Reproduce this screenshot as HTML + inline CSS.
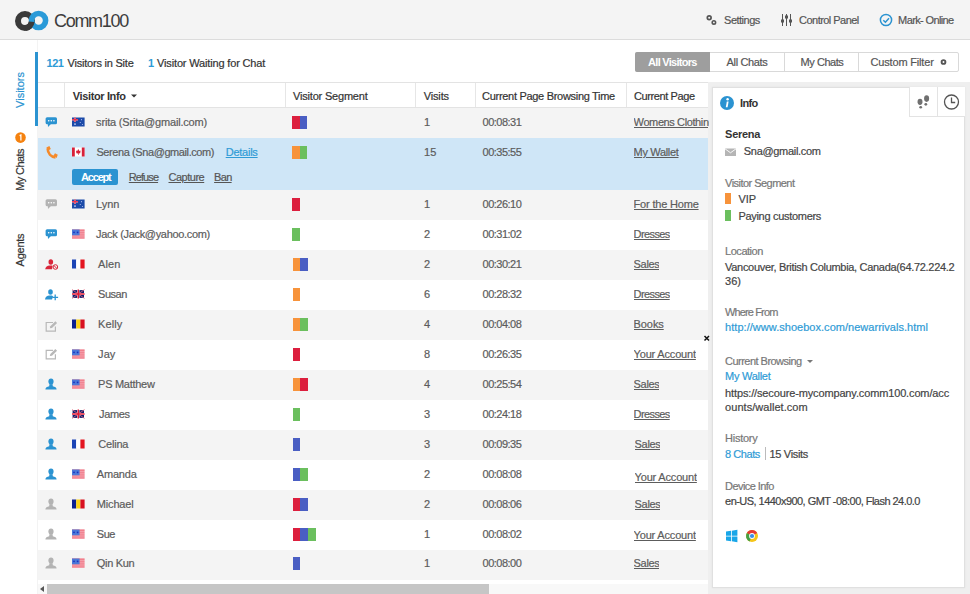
<!DOCTYPE html><html><head><meta charset='utf-8'><style>
*{margin:0;padding:0;box-sizing:border-box}
html,body{width:970px;height:594px;overflow:hidden;background:#fff;font-family:"Liberation Sans",sans-serif}
.a{position:absolute}
.t{position:absolute;white-space:nowrap;line-height:14px;font-family:"Liberation Sans",sans-serif;-webkit-text-stroke:0.2px currentColor}
.pg{overflow:hidden;max-width:75px}
</style></head><body>
<div class='a' style='left:0;top:0;width:970px;height:40px;background:#f4f4f4;border-bottom:1px solid #dcdcdc'></div><div class='a' style='left:37px;top:40px;width:1px;height:554px;background:#f3f3f3'></div><div class='a' style='left:35px;top:52px;width:3px;height:74px;background:#2b93d1'></div><div class='a' style='left:708px;top:82px;width:262px;height:512px;background:#efefef'></div><div class='a' style='left:38px;top:82px;width:670px;height:26px;background:#fff;border-top:1px solid #e3e3e3;border-bottom:1px solid #e3e3e3'></div><div class='a' style='left:64px;top:83px;width:1px;height:24px;background:#e6e6e6'></div><div class='a' style='left:285px;top:83px;width:1px;height:24px;background:#e6e6e6'></div><div class='a' style='left:415px;top:83px;width:1px;height:24px;background:#e6e6e6'></div><div class='a' style='left:475px;top:83px;width:1px;height:24px;background:#e6e6e6'></div><div class='a' style='left:626px;top:83px;width:1px;height:24px;background:#e6e6e6'></div><div class='a' style='left:38px;top:108px;width:670px;height:30px;background:#f4f4f4'></div><div class='a' style='left:38px;top:138px;width:670px;height:52px;background:#cfe6f7'></div><div class='a' style='left:38px;top:190px;width:670px;height:30px;background:#f4f4f4'></div><div class='a' style='left:38px;top:220px;width:670px;height:30px;background:#fff'></div><div class='a' style='left:38px;top:250px;width:670px;height:30px;background:#f4f4f4'></div><div class='a' style='left:38px;top:280px;width:670px;height:30px;background:#fff'></div><div class='a' style='left:38px;top:310px;width:670px;height:30px;background:#f4f4f4'></div><div class='a' style='left:38px;top:340px;width:670px;height:30px;background:#fff'></div><div class='a' style='left:38px;top:370px;width:670px;height:30px;background:#f4f4f4'></div><div class='a' style='left:38px;top:400px;width:670px;height:30px;background:#fff'></div><div class='a' style='left:38px;top:430px;width:670px;height:30px;background:#f4f4f4'></div><div class='a' style='left:38px;top:460px;width:670px;height:30px;background:#fff'></div><div class='a' style='left:38px;top:490px;width:670px;height:30px;background:#f4f4f4'></div><div class='a' style='left:38px;top:520px;width:670px;height:30px;background:#fff'></div><div class='a' style='left:38px;top:550px;width:670px;height:30px;background:#f4f4f4'></div><div class='a' style='left:38px;top:580px;width:670px;height:14px;background:#fff'></div><div class='a' style='left:38px;top:584px;width:670px;height:10px;background:#f8f8f8'></div><div class='a' style='left:47px;top:584px;width:442px;height:10px;background:#c6c6c6'></div><div class='a' style='left:40px;top:586px;width:0;height:0;border-top:3px solid transparent;border-bottom:3px solid transparent;border-right:4px solid #555'></div><div class='a' style='left:292.0px;top:116px;width:7.6px;height:13px;background:#dc1f3e'></div><div class='a' style='left:299.6px;top:116px;width:7.6px;height:13px;background:#4a5ec3'></div><div class='a' style='left:292.0px;top:146px;width:7.6px;height:13px;background:#f7933b'></div><div class='a' style='left:299.6px;top:146px;width:7.6px;height:13px;background:#6bbf5e'></div><div class='a' style='left:292.0px;top:198px;width:7.6px;height:13px;background:#dc1f3e'></div><div class='a' style='left:292.0px;top:228px;width:7.6px;height:13px;background:#6bbf5e'></div><div class='a' style='left:292.8px;top:258px;width:7.6px;height:13px;background:#f7933b'></div><div class='a' style='left:300.40000000000003px;top:258px;width:7.6px;height:13px;background:#4a5ec3'></div><div class='a' style='left:292.8px;top:288px;width:7.6px;height:13px;background:#f7933b'></div><div class='a' style='left:292.8px;top:318px;width:7.6px;height:13px;background:#f7933b'></div><div class='a' style='left:300.40000000000003px;top:318px;width:7.6px;height:13px;background:#6bbf5e'></div><div class='a' style='left:292.8px;top:348px;width:7.6px;height:13px;background:#dc1f3e'></div><div class='a' style='left:292.8px;top:378px;width:7.6px;height:13px;background:#f7933b'></div><div class='a' style='left:300.40000000000003px;top:378px;width:7.6px;height:13px;background:#dc1f3e'></div><div class='a' style='left:292.8px;top:408px;width:7.6px;height:13px;background:#6bbf5e'></div><div class='a' style='left:292.8px;top:438px;width:7.6px;height:13px;background:#4a5ec3'></div><div class='a' style='left:292.8px;top:468px;width:7.6px;height:13px;background:#4a5ec3'></div><div class='a' style='left:300.40000000000003px;top:468px;width:7.6px;height:13px;background:#6bbf5e'></div><div class='a' style='left:292.8px;top:498px;width:7.6px;height:13px;background:#dc1f3e'></div><div class='a' style='left:300.40000000000003px;top:498px;width:7.6px;height:13px;background:#4a5ec3'></div><div class='a' style='left:292.8px;top:528px;width:7.6px;height:13px;background:#dc1f3e'></div><div class='a' style='left:300.40000000000003px;top:528px;width:7.6px;height:13px;background:#4a5ec3'></div><div class='a' style='left:308.0px;top:528px;width:7.6px;height:13px;background:#6bbf5e'></div><div class='a' style='left:292.8px;top:557px;width:7.6px;height:13px;background:#4a5ec3'></div><div class='a' style='left:712px;top:87px;width:253px;height:501px;background:#fff;border:1px solid #e0e0e0;box-shadow:0 0 2px rgba(0,0,0,0.06)'></div><div class='a' style='left:909px;top:87px;width:29px;height:30px;border:1px solid #e3e3e3;border-top:none;background:#fff'></div><div class='a' style='left:937px;top:87px;width:28px;height:30px;border-left:1px solid #e3e3e3;border-bottom:1px solid #e3e3e3;background:#fff'></div><div class='a' style='left:725px;top:193px;width:5.5px;height:11px;background:#f7933b'></div><div class='a' style='left:725px;top:210px;width:5.5px;height:11px;background:#6bbf5e'></div><div class='a' style='left:765px;top:447px;width:1px;height:13px;background:#bbb'></div><div class='a' style='left:72px;top:169px;width:46px;height:16px;background:#2b93d1;border-radius:2px'></div><div class='a' style='left:635px;top:52px;width:324px;height:20px;border:1px solid #d9d9d9;border-radius:2px;background:#fff'></div><div class='a' style='left:635px;top:52px;width:75px;height:20px;background:#9e9e9e;border-radius:2px 0 0 2px'></div><div class='a' style='left:784px;top:52px;width:1px;height:20px;background:#d9d9d9'></div><div class='a' style='left:858px;top:52px;width:1px;height:20px;background:#d9d9d9'></div>
<svg class='a' style='left:0;top:0' width='970' height='594' viewBox='0 0 970 594'><rect x='45.6' y='117.2' width='11.4' height='7' rx='1.5' fill='#2b93d1'/><path d='M47.8 123.8 L48 127 L51.2 123.8 Z' fill='#2b93d1'/><circle cx='48.7' cy='120.7' r='0.8' fill='#fff'/><circle cx='51.3' cy='120.7' r='0.8' fill='#fff'/><circle cx='53.9' cy='120.7' r='0.8' fill='#fff'/><path d='M47.6 148.4 C47.8 153.5 51 157 55.5 157.4' stroke='#f58a2a' stroke-width='2.6' fill='none'/><path d='M46.4 147.4 L49.4 146 L50.8 149 L48.3 150.4 Z' fill='#f58a2a'/><path d='M53.5 155.6 L55 153.2 L57.8 154.8 L56.6 158 Z' fill='#f58a2a'/><rect x='45.6' y='199.2' width='11.4' height='7' rx='1.5' fill='#b3b3b3'/><path d='M47.8 205.8 L48 209 L51.2 205.8 Z' fill='#b3b3b3'/><circle cx='48.7' cy='202.7' r='0.8' fill='#fff'/><circle cx='51.3' cy='202.7' r='0.8' fill='#fff'/><circle cx='53.9' cy='202.7' r='0.8' fill='#fff'/><rect x='45.6' y='229.2' width='11.4' height='7' rx='1.5' fill='#2b93d1'/><path d='M47.8 235.8 L48 239 L51.2 235.8 Z' fill='#2b93d1'/><circle cx='48.7' cy='232.7' r='0.8' fill='#fff'/><circle cx='51.3' cy='232.7' r='0.8' fill='#fff'/><circle cx='53.9' cy='232.7' r='0.8' fill='#fff'/><ellipse cx='50.8' cy='262' rx='2.3' ry='2.8' fill='#d9253a'/><path d='M45.2 269.3 C45.4 266.8 47.4 265.6 49.6 265.4 L52 265.4 C52.8 265.6 53 266 53 266.4 L52 269.3 Z' fill='#d9253a'/><circle cx='55.4' cy='267' r='2.9' fill='#f4f4f4'/><circle cx='55.4' cy='267' r='2.3' stroke='#d9253a' stroke-width='1' fill='none'/><path d='M53.8 265.4 L57 268.6' stroke='#d9253a' stroke-width='1'/><ellipse cx='50.5' cy='292' rx='2.3' ry='2.8' fill='#2b93d1'/><path d='M45 299.6 C45.2 297 47.2 295.8 49.4 295.6 L51.8 295.6 C52.6 295.8 53 296.2 53 296.6 L52 299.6 Z' fill='#2b93d1'/><path d='M55.2 294.6 V300.2 M52.3 297.4 H58.1' stroke='#2b93d1' stroke-width='1.3'/><path d='M53 322.5 H46.2 V331.1 H55.4 V326.5' stroke='#b8b8b8' stroke-width='1.2' fill='none'/><path d='M49.8 328.3 L50.3 326.2 L55.3 321.2 L57.1 322.9 L52 327.9 Z' fill='#b8b8b8'/><path d='M53 350.3 H46.2 V358.90000000000003 H55.4 V354.3' stroke='#b8b8b8' stroke-width='1.2' fill='none'/><path d='M49.8 356.1 L50.3 354.0 L55.3 349.0 L57.1 350.7 L52 355.7 Z' fill='#b8b8b8'/><ellipse cx='51' cy='381.6' rx='2.6' ry='3.1' fill='#2b93d1'/><path d='M49.4 384.2 L52.6 384.2 L52.8 386.2 C55 386.6 56.6 387.4 56.6 389.6 L45.4 389.6 C45.4 387.4 47 386.6 49.2 386.2 Z' fill='#2b93d1'/><ellipse cx='51' cy='411.6' rx='2.6' ry='3.1' fill='#2b93d1'/><path d='M49.4 414.2 L52.6 414.2 L52.8 416.2 C55 416.6 56.6 417.4 56.6 419.6 L45.4 419.6 C45.4 417.4 47 416.6 49.2 416.2 Z' fill='#2b93d1'/><ellipse cx='51' cy='441.6' rx='2.6' ry='3.1' fill='#2b93d1'/><path d='M49.4 444.2 L52.6 444.2 L52.8 446.2 C55 446.6 56.6 447.4 56.6 449.6 L45.4 449.6 C45.4 447.4 47 446.6 49.2 446.2 Z' fill='#2b93d1'/><ellipse cx='51' cy='471.6' rx='2.6' ry='3.1' fill='#2b93d1'/><path d='M49.4 474.2 L52.6 474.2 L52.8 476.2 C55 476.6 56.6 477.4 56.6 479.6 L45.4 479.6 C45.4 477.4 47 476.6 49.2 476.2 Z' fill='#2b93d1'/><ellipse cx='51' cy='501.6' rx='2.6' ry='3.1' fill='#b3b3b3'/><path d='M49.4 504.2 L52.6 504.2 L52.8 506.2 C55 506.6 56.6 507.4 56.6 509.6 L45.4 509.6 C45.4 507.4 47 506.6 49.2 506.2 Z' fill='#b3b3b3'/><ellipse cx='51' cy='531.6' rx='2.6' ry='3.1' fill='#b3b3b3'/><path d='M49.4 534.2 L52.6 534.2 L52.8 536.2 C55 536.6 56.6 537.4 56.6 539.6 L45.4 539.6 C45.4 537.4 47 536.6 49.2 536.2 Z' fill='#b3b3b3'/><ellipse cx='51' cy='560.6' rx='2.6' ry='3.1' fill='#b3b3b3'/><path d='M49.4 563.2 L52.6 563.2 L52.8 565.2 C55 565.6 56.6 566.4 56.6 568.6 L45.4 568.6 C45.4 566.4 47 565.6 49.2 565.2 Z' fill='#b3b3b3'/><rect x='72' y='117.5' width='12.6' height='9' fill='#1b4aa8'/><path d='M72 119.7 H78 M75 117.5 V121.9' stroke='#f6b0bb' stroke-width='1.6'/><path d='M72 119.7 H78 M75 117.5 V121.9' stroke='#e8203f' stroke-width='1'/><circle cx='75' cy='124.1' r='0.9' fill='#c8d2f5'/><circle cx='81.5' cy='119.7' r='0.6' fill='#aebdf0'/><circle cx='80.3' cy='122.5' r='0.6' fill='#aebdf0'/><circle cx='82.5' cy='124.5' r='0.6' fill='#aebdf0'/><rect x='72' y='147.5' width='12.6' height='9' fill='#fff'/><rect x='72' y='147.5' width='2.8' height='9' fill='#d8213a'/><rect x='81.8' y='147.5' width='2.8' height='9' fill='#d8213a'/><path d='M78.3 149.1 L79.4 150.9 L80.6 150.5 L80.2 153.3 L78.6 153.5 L78.6 155.1 L78 155.1 L78 153.5 L76.4 153.3 L76 150.5 L77.2 150.9 Z' fill='#d8213a'/><rect x='72' y='199.5' width='12.6' height='9' fill='#1b4aa8'/><path d='M72 201.7 H78 M75 199.5 V203.9' stroke='#f6b0bb' stroke-width='1.6'/><path d='M72 201.7 H78 M75 199.5 V203.9' stroke='#e8203f' stroke-width='1'/><circle cx='75' cy='206.1' r='0.9' fill='#c8d2f5'/><circle cx='81.5' cy='201.7' r='0.6' fill='#aebdf0'/><circle cx='80.3' cy='204.5' r='0.6' fill='#aebdf0'/><circle cx='82.5' cy='206.5' r='0.6' fill='#aebdf0'/><rect x='72' y='229.5' width='12.6' height='9' fill='#fbe3e6'/><rect x='72' y='229.5' width='12.6' height='1.3' fill='#ee6677'/><rect x='72' y='231.45' width='12.6' height='1.3' fill='#ee6677'/><rect x='72' y='233.4' width='12.6' height='1.3' fill='#ee6677'/><rect x='72' y='235.35' width='12.6' height='1.3' fill='#ee6677'/><rect x='72' y='237.3' width='12.6' height='1.3' fill='#ee6677'/><rect x='72' y='229.5' width='7.6' height='5.8' fill='#4a78d8'/><circle cx='74' cy='232.3' r='0.9' fill='#1a2fbf'/><circle cx='77.6' cy='232.3' r='0.9' fill='#1a2fbf'/><rect x='72' y='259.5' width='4.2' height='9' fill='#1d45b5'/><rect x='76.2' y='259.5' width='4.2' height='9' fill='#fff'/><rect x='80.4' y='259.5' width='4.2' height='9' fill='#e3141f'/><rect x='72' y='289.5' width='12.6' height='9' fill='#fff'/><rect x='72.6' y='290.1' width='4.6' height='2.9' fill='#12206e'/><rect x='79.4' y='290.1' width='4.6' height='2.9' fill='#12206e'/><rect x='72.6' y='295.0' width='4.6' height='2.9' fill='#12206e'/><rect x='79.4' y='295.0' width='4.6' height='2.9' fill='#12206e'/><path d='M72 289.5 L84.6 298.5 M84.6 289.5 L72 298.5' stroke='#e86a80' stroke-width='0.8'/><path d='M72 294.0 H84.6 M78.3 289.5 V298.5' stroke='#e31a35' stroke-width='1.4'/><rect x='72' y='319.5' width='4.2' height='9' fill='#0c1f8f'/><rect x='76.2' y='319.5' width='4.2' height='9' fill='#fcd116'/><rect x='80.4' y='319.5' width='4.2' height='9' fill='#d8101f'/><rect x='72' y='349.5' width='12.6' height='9' fill='#fbe3e6'/><rect x='72' y='349.5' width='12.6' height='1.3' fill='#ee6677'/><rect x='72' y='351.45' width='12.6' height='1.3' fill='#ee6677'/><rect x='72' y='353.4' width='12.6' height='1.3' fill='#ee6677'/><rect x='72' y='355.35' width='12.6' height='1.3' fill='#ee6677'/><rect x='72' y='357.3' width='12.6' height='1.3' fill='#ee6677'/><rect x='72' y='349.5' width='7.6' height='5.8' fill='#4a78d8'/><circle cx='74' cy='352.3' r='0.9' fill='#1a2fbf'/><circle cx='77.6' cy='352.3' r='0.9' fill='#1a2fbf'/><rect x='72' y='379.5' width='12.6' height='9' fill='#fbe3e6'/><rect x='72' y='379.5' width='12.6' height='1.3' fill='#ee6677'/><rect x='72' y='381.45' width='12.6' height='1.3' fill='#ee6677'/><rect x='72' y='383.4' width='12.6' height='1.3' fill='#ee6677'/><rect x='72' y='385.35' width='12.6' height='1.3' fill='#ee6677'/><rect x='72' y='387.3' width='12.6' height='1.3' fill='#ee6677'/><rect x='72' y='379.5' width='7.6' height='5.8' fill='#4a78d8'/><circle cx='74' cy='382.3' r='0.9' fill='#1a2fbf'/><circle cx='77.6' cy='382.3' r='0.9' fill='#1a2fbf'/><rect x='72' y='409.5' width='12.6' height='9' fill='#fff'/><rect x='72.6' y='410.1' width='4.6' height='2.9' fill='#12206e'/><rect x='79.4' y='410.1' width='4.6' height='2.9' fill='#12206e'/><rect x='72.6' y='415.0' width='4.6' height='2.9' fill='#12206e'/><rect x='79.4' y='415.0' width='4.6' height='2.9' fill='#12206e'/><path d='M72 409.5 L84.6 418.5 M84.6 409.5 L72 418.5' stroke='#e86a80' stroke-width='0.8'/><path d='M72 414.0 H84.6 M78.3 409.5 V418.5' stroke='#e31a35' stroke-width='1.4'/><rect x='72' y='439.5' width='4.2' height='9' fill='#1d45b5'/><rect x='76.2' y='439.5' width='4.2' height='9' fill='#fff'/><rect x='80.4' y='439.5' width='4.2' height='9' fill='#e3141f'/><rect x='72' y='469.5' width='12.6' height='9' fill='#fbe3e6'/><rect x='72' y='469.5' width='12.6' height='1.3' fill='#ee6677'/><rect x='72' y='471.45' width='12.6' height='1.3' fill='#ee6677'/><rect x='72' y='473.4' width='12.6' height='1.3' fill='#ee6677'/><rect x='72' y='475.35' width='12.6' height='1.3' fill='#ee6677'/><rect x='72' y='477.3' width='12.6' height='1.3' fill='#ee6677'/><rect x='72' y='469.5' width='7.6' height='5.8' fill='#4a78d8'/><circle cx='74' cy='472.3' r='0.9' fill='#1a2fbf'/><circle cx='77.6' cy='472.3' r='0.9' fill='#1a2fbf'/><rect x='72' y='499.5' width='4.2' height='9' fill='#0c1f8f'/><rect x='76.2' y='499.5' width='4.2' height='9' fill='#fcd116'/><rect x='80.4' y='499.5' width='4.2' height='9' fill='#d8101f'/><rect x='72' y='529.5' width='12.6' height='9' fill='#fbe3e6'/><rect x='72' y='529.5' width='12.6' height='1.3' fill='#ee6677'/><rect x='72' y='531.45' width='12.6' height='1.3' fill='#ee6677'/><rect x='72' y='533.4' width='12.6' height='1.3' fill='#ee6677'/><rect x='72' y='535.35' width='12.6' height='1.3' fill='#ee6677'/><rect x='72' y='537.3' width='12.6' height='1.3' fill='#ee6677'/><rect x='72' y='529.5' width='7.6' height='5.8' fill='#4a78d8'/><circle cx='74' cy='532.3' r='0.9' fill='#1a2fbf'/><circle cx='77.6' cy='532.3' r='0.9' fill='#1a2fbf'/><rect x='72' y='558.5' width='12.6' height='9' fill='#fbe3e6'/><rect x='72' y='558.5' width='12.6' height='1.3' fill='#ee6677'/><rect x='72' y='560.45' width='12.6' height='1.3' fill='#ee6677'/><rect x='72' y='562.4' width='12.6' height='1.3' fill='#ee6677'/><rect x='72' y='564.35' width='12.6' height='1.3' fill='#ee6677'/><rect x='72' y='566.3' width='12.6' height='1.3' fill='#ee6677'/><rect x='72' y='558.5' width='7.6' height='5.8' fill='#4a78d8'/><circle cx='74' cy='561.3' r='0.9' fill='#1a2fbf'/><circle cx='77.6' cy='561.3' r='0.9' fill='#1a2fbf'/><circle cx='25' cy='21' r='7' stroke='#3a3a3a' stroke-width='6' fill='none'/><path d='M32 13 A7.5 7.5 0 0 0 30 24' stroke='#f4f4f4' stroke-width='0' fill='none'/><circle cx='38.6' cy='20.5' r='7' stroke='#2a9ad8' stroke-width='5.6' fill='none'/><path d='M31.6 21.8 A7 7 0 0 1 25.5 28' stroke='#3a3a3a' stroke-width='6' fill='none'/><circle cx='709.2' cy='17.8' r='1.9' stroke='#555' stroke-width='1.7' fill='none'/><circle cx='713.9' cy='22.4' r='1.7' stroke='#555' stroke-width='1.6' fill='none'/><path d='M782.5 14 V26' stroke='#555' stroke-width='1'/><rect x='781.0' y='19.5' width='3' height='3' fill='#555'/><path d='M786.5 14 V26' stroke='#555' stroke-width='1'/><rect x='785.0' y='15.5' width='3' height='3' fill='#555'/><path d='M790.5 14 V26' stroke='#555' stroke-width='1'/><rect x='789.0' y='19.5' width='3' height='3' fill='#555'/><circle cx='886' cy='20' r='5.6' stroke='#2b93d1' stroke-width='1.5' fill='none'/><path d='M883.3 20.2 L885.4 22.2 L889 18.3' stroke='#2b93d1' stroke-width='1.5' fill='none'/><circle cx='943.5' cy='62' r='1.9' stroke='#555' stroke-width='1.9' fill='none'/><path d='M131 94.5 L137 94.5 L134 97.5 Z' fill='#333'/><circle cx='727' cy='103' r='7' fill='#2b93d1'/><circle cx='727.6' cy='99.3' r='1.2' fill='#fff'/><path d='M726.8 101.6 L728.6 101.6 L727.6 107.2 L725.8 107.2 Z' fill='#fff'/><ellipse cx='920' cy='101.8' rx='2.5' ry='3.1' fill='#707070'/><ellipse cx='920.7' cy='107.3' rx='1.4' ry='1.3' fill='#707070'/><ellipse cx='926.6' cy='98.6' rx='2.5' ry='3.3' fill='#707070'/><ellipse cx='925.8' cy='104.3' rx='1.4' ry='1.4' fill='#707070'/><circle cx='951.5' cy='102' r='7' stroke='#555' stroke-width='1.3' fill='none'/><path d='M951.5 97.5 V102.5 H955.2' stroke='#555' stroke-width='1.3' fill='none'/><rect x='725' y='148.5' width='11' height='7.5' fill='#b5b5b5'/><path d='M725 148.8 L730.5 152.8 L736 148.8' stroke='#fff' stroke-width='0.9' fill='none'/><path d='M807 360 L813 360 L810 363 Z' fill='#777'/><path d='M726 531.6 L731 530.8 V535.7 H726 Z M731.8 530.7 L737.4 529.8 V535.7 H731.8 Z M726 536.5 H731 V541.2 L726 540.4 Z M731.8 536.5 H737.4 V542.2 L731.8 541.3 Z' fill='#18a6e8'/><circle cx='752' cy='536' r='6' fill='#f5c518'/><path d='M752 536 L746.8 533 A6 6 0 0 1 757.2 533 Z' fill='#e53935'/><path d='M752 536 L746.8 533 A6 6 0 0 0 749.5 541.5 Z' fill='#43a047'/><circle cx='752' cy='536' r='2.9' fill='#fff'/><circle cx='752' cy='536' r='2.1' fill='#3a8ee6'/><path d='M704.5 336 L709 340.5 M709 336 L704.5 340.5' stroke='#111' stroke-width='1.5'/><circle cx='20.5' cy='137.6' r='5.3' fill='#f5820f'/><path d='M19.6 135.6 L20.9 134.9 V140.4' stroke='#fff' stroke-width='1.2' fill='none'/></svg>
<div class='t' style='left:54px;top:10px;font-size:18px;line-height:22px;color:#3d3d3d;letter-spacing:-1.3px;-webkit-text-stroke:0'>Comm100</div>
<div class='t' style='left:2px;top:83px;width:36px;height:14px;font-size:11px;color:#2b93d1;transform:rotate(-90deg);transform-origin:center;text-align:center'>Visitors</div>
<div class='t' style='left:-10px;top:163px;width:60px;height:14px;font-size:11px;color:#333;letter-spacing:-0.6px;transform:rotate(-90deg);transform-origin:center;text-align:center'>My Chats</div>
<div class='t' style='left:-10px;top:243px;width:60px;height:14px;font-size:11px;color:#333;letter-spacing:-0.25px;transform:rotate(-90deg);transform-origin:center;text-align:center'>Agents</div>
<div class='t ' style='left:724.1px;top:13.0px;font-size:11px;font-weight:normal;color:#555;letter-spacing:-0.51px;'>Settings</div>
<div class='t ' style='left:799.1px;top:13.0px;font-size:11px;font-weight:normal;color:#555;letter-spacing:-0.54px;'>Control Panel</div>
<div class='t ' style='left:898.1px;top:13.0px;font-size:11px;font-weight:normal;color:#555;letter-spacing:-0.62px;'>Mark- Online</div>
<div class='t ' style='left:46.6px;top:55.5px;font-size:11px;font-weight:bold;color:#2e9bd6;letter-spacing:-0.58px;-webkit-text-stroke:0;'>121</div>
<div class='t ' style='left:67.6px;top:55.5px;font-size:11px;font-weight:normal;color:#333;letter-spacing:-0.22px;'>Visitors in Site</div>
<div class='t ' style='left:148.1px;top:55.5px;font-size:11px;font-weight:bold;color:#2e9bd6;letter-spacing:0.00px;-webkit-text-stroke:0;'>1</div>
<div class='t ' style='left:157.1px;top:55.5px;font-size:11px;font-weight:normal;color:#333;letter-spacing:-0.16px;'>Visitor Waiting for Chat</div>
<div class='t ' style='left:648.1px;top:55.0px;font-size:11px;font-weight:bold;color:#fff;letter-spacing:-0.73px;-webkit-text-stroke:0;'>All Visitors</div>
<div class='t ' style='left:726.6px;top:55.0px;font-size:11px;font-weight:normal;color:#555;letter-spacing:-0.35px;'>All Chats</div>
<div class='t ' style='left:800.6px;top:55.0px;font-size:11px;font-weight:normal;color:#555;letter-spacing:-0.47px;'>My Chats</div>
<div class='t ' style='left:870.6px;top:55.0px;font-size:11px;font-weight:normal;color:#555;letter-spacing:-0.18px;'>Custom Filter</div>
<div class='t ' style='left:72.8px;top:89.0px;font-size:11px;font-weight:bold;color:#333;letter-spacing:-0.37px;-webkit-text-stroke:0;'>Visitor Info</div>
<div class='t ' style='left:293.1px;top:89.0px;font-size:11px;font-weight:normal;color:#333;letter-spacing:-0.20px;'>Visitor Segment</div>
<div class='t ' style='left:423.7px;top:89.0px;font-size:11px;font-weight:normal;color:#333;letter-spacing:-0.14px;'>Visits</div>
<div class='t ' style='left:482.1px;top:89.0px;font-size:11px;font-weight:normal;color:#333;letter-spacing:-0.30px;'>Current Page Browsing Time</div>
<div class='t ' style='left:633.9px;top:89.0px;font-size:11px;font-weight:normal;color:#333;letter-spacing:-0.39px;'>Current Page</div>
<div class='t ' style='left:96.1px;top:115.0px;font-size:11px;font-weight:normal;color:#5c5c5c;letter-spacing:-0.18px;'>srita (Srita@gmail.com)</div>
<div class='t ' style='left:424.1px;top:115.0px;font-size:11px;font-weight:normal;color:#5c5c5c;letter-spacing:0.00px;'>1</div>
<div class='t ' style='left:482.6px;top:115.0px;font-size:11px;font-weight:normal;color:#5c5c5c;letter-spacing:-0.52px;'>00:08:31</div>
<div class='t pg' style='left:633.6px;top:115.0px;font-size:11px;font-weight:normal;color:#5c5c5c;letter-spacing:-0.39px;text-decoration:underline;'>Womens Clothing</div>
<div class='t ' style='left:96.4px;top:145.0px;font-size:11px;font-weight:normal;color:#5c5c5c;letter-spacing:-0.41px;'>Serena (Sna@gmail.com)</div>
<div class='t ' style='left:424.1px;top:145.0px;font-size:11px;font-weight:normal;color:#5c5c5c;letter-spacing:0.00px;'>15</div>
<div class='t ' style='left:482.6px;top:145.0px;font-size:11px;font-weight:normal;color:#5c5c5c;letter-spacing:-0.52px;'>00:35:55</div>
<div class='t pg' style='left:633.6px;top:145.0px;font-size:11px;font-weight:normal;color:#5c5c5c;letter-spacing:-0.33px;text-decoration:underline;'>My Wallet</div>
<div class='t ' style='left:96.1px;top:197.0px;font-size:11px;font-weight:normal;color:#5c5c5c;letter-spacing:-0.08px;'>Lynn</div>
<div class='t ' style='left:424.1px;top:197.0px;font-size:11px;font-weight:normal;color:#5c5c5c;letter-spacing:0.00px;'>1</div>
<div class='t ' style='left:482.6px;top:197.0px;font-size:11px;font-weight:normal;color:#5c5c5c;letter-spacing:-0.52px;'>00:26:10</div>
<div class='t pg' style='left:633.6px;top:197.0px;font-size:11px;font-weight:normal;color:#5c5c5c;letter-spacing:-0.19px;text-decoration:underline;'>For the Home</div>
<div class='t ' style='left:96.1px;top:227.0px;font-size:11px;font-weight:normal;color:#5c5c5c;letter-spacing:-0.32px;'>Jack (Jack@yahoo.com)</div>
<div class='t ' style='left:424.1px;top:227.0px;font-size:11px;font-weight:normal;color:#5c5c5c;letter-spacing:0.00px;'>2</div>
<div class='t ' style='left:482.6px;top:227.0px;font-size:11px;font-weight:normal;color:#5c5c5c;letter-spacing:-0.52px;'>00:31:02</div>
<div class='t pg' style='left:633.6px;top:227.0px;font-size:11px;font-weight:normal;color:#5c5c5c;letter-spacing:-0.61px;text-decoration:underline;'>Dresses</div>
<div class='t ' style='left:98.1px;top:257.0px;font-size:11px;font-weight:normal;color:#5c5c5c;letter-spacing:0.06px;'>Alen</div>
<div class='t ' style='left:424.1px;top:257.0px;font-size:11px;font-weight:normal;color:#5c5c5c;letter-spacing:0.00px;'>2</div>
<div class='t ' style='left:482.6px;top:257.0px;font-size:11px;font-weight:normal;color:#5c5c5c;letter-spacing:-0.52px;'>00:30:21</div>
<div class='t pg' style='left:633.6px;top:257.0px;font-size:11px;font-weight:normal;color:#5c5c5c;letter-spacing:-0.33px;text-decoration:underline;'>Sales</div>
<div class='t ' style='left:98.1px;top:287.0px;font-size:11px;font-weight:normal;color:#5c5c5c;letter-spacing:-0.50px;'>Susan</div>
<div class='t ' style='left:424.1px;top:287.0px;font-size:11px;font-weight:normal;color:#5c5c5c;letter-spacing:0.00px;'>6</div>
<div class='t ' style='left:482.6px;top:287.0px;font-size:11px;font-weight:normal;color:#5c5c5c;letter-spacing:-0.52px;'>00:28:32</div>
<div class='t pg' style='left:633.6px;top:287.0px;font-size:11px;font-weight:normal;color:#5c5c5c;letter-spacing:-0.61px;text-decoration:underline;'>Dresses</div>
<div class='t ' style='left:98.1px;top:317.0px;font-size:11px;font-weight:normal;color:#5c5c5c;letter-spacing:0.09px;'>Kelly</div>
<div class='t ' style='left:424.1px;top:317.0px;font-size:11px;font-weight:normal;color:#5c5c5c;letter-spacing:0.00px;'>4</div>
<div class='t ' style='left:482.6px;top:317.0px;font-size:11px;font-weight:normal;color:#5c5c5c;letter-spacing:-0.52px;'>00:04:08</div>
<div class='t pg' style='left:633.6px;top:317.0px;font-size:11px;font-weight:normal;color:#5c5c5c;letter-spacing:-0.09px;text-decoration:underline;'>Books</div>
<div class='t ' style='left:98.1px;top:347.0px;font-size:11px;font-weight:normal;color:#5c5c5c;letter-spacing:0.04px;'>Jay</div>
<div class='t ' style='left:424.1px;top:347.0px;font-size:11px;font-weight:normal;color:#5c5c5c;letter-spacing:0.00px;'>8</div>
<div class='t ' style='left:482.6px;top:347.0px;font-size:11px;font-weight:normal;color:#5c5c5c;letter-spacing:-0.52px;'>00:26:35</div>
<div class='t pg' style='left:633.6px;top:347.0px;font-size:11px;font-weight:normal;color:#5c5c5c;letter-spacing:-0.18px;text-decoration:underline;'>Your Account</div>
<div class='t ' style='left:98.1px;top:377.0px;font-size:11px;font-weight:normal;color:#5c5c5c;letter-spacing:-0.28px;'>PS Matthew</div>
<div class='t ' style='left:424.1px;top:377.0px;font-size:11px;font-weight:normal;color:#5c5c5c;letter-spacing:0.00px;'>4</div>
<div class='t ' style='left:482.6px;top:377.0px;font-size:11px;font-weight:normal;color:#5c5c5c;letter-spacing:-0.52px;'>00:25:54</div>
<div class='t pg' style='left:633.6px;top:377.0px;font-size:11px;font-weight:normal;color:#5c5c5c;letter-spacing:-0.33px;text-decoration:underline;'>Sales</div>
<div class='t ' style='left:99.1px;top:407.0px;font-size:11px;font-weight:normal;color:#5c5c5c;letter-spacing:-0.38px;'>James</div>
<div class='t ' style='left:424.1px;top:407.0px;font-size:11px;font-weight:normal;color:#5c5c5c;letter-spacing:0.00px;'>3</div>
<div class='t ' style='left:482.6px;top:407.0px;font-size:11px;font-weight:normal;color:#5c5c5c;letter-spacing:-0.52px;'>00:24:18</div>
<div class='t pg' style='left:633.6px;top:407.0px;font-size:11px;font-weight:normal;color:#5c5c5c;letter-spacing:-0.61px;text-decoration:underline;'>Dresses</div>
<div class='t ' style='left:98.3px;top:437.0px;font-size:11px;font-weight:normal;color:#5c5c5c;letter-spacing:-0.20px;'>Celina</div>
<div class='t ' style='left:424.1px;top:437.0px;font-size:11px;font-weight:normal;color:#5c5c5c;letter-spacing:0.00px;'>3</div>
<div class='t ' style='left:482.6px;top:437.0px;font-size:11px;font-weight:normal;color:#5c5c5c;letter-spacing:-0.52px;'>00:09:35</div>
<div class='t pg' style='left:634.6px;top:437.0px;font-size:11px;font-weight:normal;color:#5c5c5c;letter-spacing:-0.33px;text-decoration:underline;'>Sales</div>
<div class='t ' style='left:96.8px;top:467.0px;font-size:11px;font-weight:normal;color:#5c5c5c;letter-spacing:-0.20px;'>Amanda</div>
<div class='t ' style='left:424.1px;top:467.0px;font-size:11px;font-weight:normal;color:#5c5c5c;letter-spacing:0.00px;'>2</div>
<div class='t ' style='left:482.6px;top:467.0px;font-size:11px;font-weight:normal;color:#5c5c5c;letter-spacing:-0.52px;'>00:08:08</div>
<div class='t pg' style='left:634.6px;top:470.0px;font-size:11px;font-weight:normal;color:#5c5c5c;letter-spacing:-0.18px;text-decoration:underline;'>Your Account</div>
<div class='t ' style='left:96.8px;top:497.0px;font-size:11px;font-weight:normal;color:#5c5c5c;letter-spacing:-0.17px;'>Michael</div>
<div class='t ' style='left:424.1px;top:497.0px;font-size:11px;font-weight:normal;color:#5c5c5c;letter-spacing:0.00px;'>2</div>
<div class='t ' style='left:482.6px;top:497.0px;font-size:11px;font-weight:normal;color:#5c5c5c;letter-spacing:-0.52px;'>00:08:06</div>
<div class='t pg' style='left:634.6px;top:497.0px;font-size:11px;font-weight:normal;color:#5c5c5c;letter-spacing:-0.33px;text-decoration:underline;'>Sales</div>
<div class='t ' style='left:96.8px;top:527.0px;font-size:11px;font-weight:normal;color:#5c5c5c;letter-spacing:-0.44px;'>Sue</div>
<div class='t ' style='left:424.1px;top:527.0px;font-size:11px;font-weight:normal;color:#5c5c5c;letter-spacing:0.00px;'>1</div>
<div class='t ' style='left:482.6px;top:527.0px;font-size:11px;font-weight:normal;color:#5c5c5c;letter-spacing:-0.52px;'>00:08:02</div>
<div class='t pg' style='left:633.6px;top:528.0px;font-size:11px;font-weight:normal;color:#5c5c5c;letter-spacing:-0.18px;text-decoration:underline;'>Your Account</div>
<div class='t ' style='left:96.8px;top:556.0px;font-size:11px;font-weight:normal;color:#5c5c5c;letter-spacing:-0.32px;'>Qin Kun</div>
<div class='t ' style='left:424.1px;top:556.0px;font-size:11px;font-weight:normal;color:#5c5c5c;letter-spacing:0.00px;'>1</div>
<div class='t ' style='left:482.6px;top:556.0px;font-size:11px;font-weight:normal;color:#5c5c5c;letter-spacing:-0.52px;'>00:08:00</div>
<div class='t pg' style='left:633.6px;top:556.0px;font-size:11px;font-weight:normal;color:#5c5c5c;letter-spacing:-0.33px;text-decoration:underline;'>Sales</div>
<div class='t ' style='left:225.7px;top:145.0px;font-size:11px;font-weight:normal;color:#2e9bd6;letter-spacing:-0.24px;text-decoration:underline;'>Details</div>
<div class='t ' style='left:81.1px;top:170.0px;font-size:11px;font-weight:bold;color:#fff;letter-spacing:-1.20px;-webkit-text-stroke:0;'>Accept</div>
<div class='t ' style='left:128.8px;top:170.0px;font-size:11px;font-weight:normal;color:#555;letter-spacing:-0.93px;text-decoration:underline;'>Refuse</div>
<div class='t ' style='left:168.5px;top:170.0px;font-size:11px;font-weight:normal;color:#555;letter-spacing:-0.49px;text-decoration:underline;'>Capture</div>
<div class='t ' style='left:214.1px;top:170.0px;font-size:11px;font-weight:normal;color:#555;letter-spacing:-0.69px;text-decoration:underline;'>Ban</div>
<div class='t ' style='left:740.1px;top:96.0px;font-size:11px;font-weight:bold;color:#333;letter-spacing:-0.66px;-webkit-text-stroke:0;'>Info</div>
<div class='t ' style='left:725.1px;top:127.0px;font-size:11px;font-weight:bold;color:#333;letter-spacing:-0.30px;-webkit-text-stroke:0;'>Serena</div>
<div class='t ' style='left:743.8px;top:144.0px;font-size:11px;font-weight:normal;color:#444;letter-spacing:-0.31px;'>Sna@gmail.com</div>
<div class='t ' style='left:725.1px;top:176.0px;font-size:11px;font-weight:normal;color:#777;letter-spacing:-0.54px;'>Visitor Segment</div>
<div class='t ' style='left:738.4px;top:191.6px;font-size:11px;font-weight:normal;color:#444;letter-spacing:0.00px;'>VIP</div>
<div class='t ' style='left:738.4px;top:208.8px;font-size:11px;font-weight:normal;color:#444;letter-spacing:-0.30px;'>Paying customers</div>
<div class='t ' style='left:725.1px;top:244.0px;font-size:11px;font-weight:normal;color:#777;letter-spacing:-0.48px;'>Location</div>
<div class='t ' style='left:725.1px;top:259.5px;font-size:11px;font-weight:normal;color:#444;letter-spacing:-0.31px;'>Vancouver, British Columbia, Canada(64.72.224.2</div>
<div class='t ' style='left:725.1px;top:273.5px;font-size:11px;font-weight:normal;color:#444;letter-spacing:0.00px;'>36)</div>
<div class='t ' style='left:725.1px;top:305.0px;font-size:11px;font-weight:normal;color:#777;letter-spacing:-0.88px;'>Where From</div>
<div class='t ' style='left:725.1px;top:320.0px;font-size:11px;font-weight:normal;color:#2e9bd6;letter-spacing:0.03px;'>http://www.shoebox.com/newarrivals.html</div>
<div class='t ' style='left:725.1px;top:353.5px;font-size:11px;font-weight:normal;color:#777;letter-spacing:-0.53px;'>Current Browsing</div>
<div class='t ' style='left:725.1px;top:369.0px;font-size:11px;font-weight:normal;color:#2e9bd6;letter-spacing:-0.28px;'>My Wallet</div>
<div class='t ' style='left:725.1px;top:386.0px;font-size:11px;font-weight:normal;color:#444;letter-spacing:-0.14px;'>https://secoure-mycompany.comm100.com/acc</div>
<div class='t ' style='left:725.1px;top:400.0px;font-size:11px;font-weight:normal;color:#444;letter-spacing:0.04px;'>ounts/wallet.com</div>
<div class='t ' style='left:725.1px;top:431.0px;font-size:11px;font-weight:normal;color:#777;letter-spacing:-0.27px;'>History</div>
<div class='t ' style='left:725.1px;top:447.0px;font-size:11px;font-weight:normal;color:#2e9bd6;letter-spacing:-0.45px;'>8 Chats</div>
<div class='t ' style='left:769.5px;top:447.0px;font-size:11px;font-weight:normal;color:#444;letter-spacing:-0.32px;'>15 Visits</div>
<div class='t ' style='left:725.1px;top:478.5px;font-size:11px;font-weight:normal;color:#777;letter-spacing:-0.58px;'>Device Info</div>
<div class='t ' style='left:725.1px;top:494.0px;font-size:11px;font-weight:normal;color:#444;letter-spacing:-0.54px;'>en-US, 1440x900, GMT -08:00, Flash 24.0.0</div>
</body></html>
